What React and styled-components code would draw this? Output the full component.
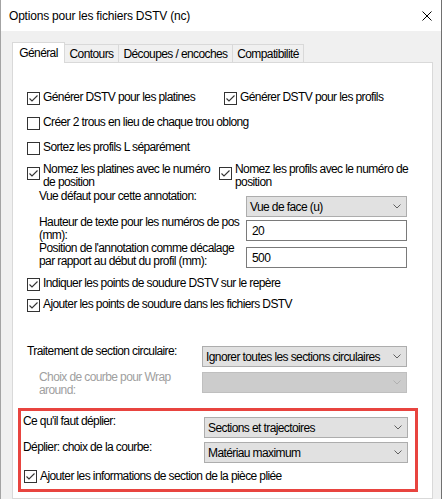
import React from "react";
import styled, { createGlobalStyle } from "styled-components";

const Global = createGlobalStyle`
  html, body { margin: 0; padding: 0; background: #f0f0f0; }
  body { font-family: "Liberation Sans", Arial, sans-serif; }
  *, *::before, *::after { box-sizing: border-box; }
`;

const Window = styled.div`
  width: 442px;
  height: 499px;
  display: flex;
  flex-direction: column;
  background: #f0f0f0;
  border-left: 1px solid #a3a3a3;
  border-right: 1px solid #707070;
  overflow: hidden;
  font-size: 12px;
  letter-spacing: -0.6px;
  color: #000;
`;

const TitleBar = styled.div`
  flex: none;
  height: 31px;
  background: #fff;
  display: flex;
  align-items: center;
  justify-content: space-between;
  padding: 0 9px 0 8px;
`;

const Title = styled.span`
  font-size: 12px;
  letter-spacing: -0.2px;
`;

const CloseIcon = styled.svg`
  display: block;
  width: 10px;
  height: 10px;
`;

const Body = styled.div`
  flex: 1;
  min-height: 0;
  display: flex;
  flex-direction: column;
  padding: 11px 8px 0 11px;
`;

const TabStrip = styled.div`
  flex: none;
  height: 20px;
  display: flex;
  align-items: flex-end;
`;

const Tab = styled.div`
  position: relative;
  z-index: ${(p) => (p.$active ? 1 : 0)};
  width: ${(p) => p.$w}px;
  height: ${(p) => (p.$active ? 21 : 18)}px;
  margin-left: ${(p) => (p.$first ? 0 : -1)}px;
  margin-bottom: ${(p) => (p.$active ? -1 : 0)}px;
  background: ${(p) => (p.$active ? "#fff" : "#f0f0f0")};
  border: 1px solid #d9d9d9;
  border-bottom: none;
  display: flex;
  align-items: center;
  justify-content: center;
  white-space: nowrap;
`;

const Panel = styled.div`
  flex: 1;
  background: #fff;
  border: 1px solid #d9d9d9;
  display: flex;
  flex-direction: column;
`;

const CheckRow = styled.div`
  display: flex;
  align-items: flex-start;
  margin-top: ${(p) => p.$mt}px;
  padding-left: ${(p) => p.$indent}px;
`;

const CheckItem = styled.div`
  flex: none;
  display: flex;
  align-items: flex-start;
  gap: 3px;
  width: ${(p) => (p.$w ? `${p.$w}px` : "auto")};
`;

const Box = styled.span`
  flex: none;
  width: 13px;
  height: 13px;
  margin-top: ${(p) => p.$dy}px;
  border: 1px solid #333;
  background: #fff;
  display: flex;
  align-items: center;
  justify-content: center;
`;

const Text = styled.span`
  line-height: 13px;
  white-space: nowrap;
  color: ${(p) => (p.$disabled ? "#a0a0a0" : "#000")};
`;

const FieldRow = styled.div`
  display: flex;
  align-items: flex-start;
  margin-top: ${(p) => p.$mt}px;
  padding-right: ${(p) => p.$pr}px;
`;

const FieldLabel = styled(Text)`
  flex: 1;
  padding-left: ${(p) => p.$indent}px;
`;

const Select = styled.div`
  flex: none;
  width: ${(p) => p.$w}px;
  height: 21px;
  margin-top: ${(p) => p.$dy}px;
  display: flex;
  align-items: center;
  justify-content: space-between;
  padding: 0 5px 0 3px;
  background: ${(p) => (p.$disabled ? "#cccccc" : "#e1e1e1")};
  border: 1px solid ${(p) => (p.$disabled ? "#bfbfbf" : "#adadad")};
  white-space: nowrap;
`;

const TextBox = styled.div`
  flex: none;
  width: ${(p) => p.$w}px;
  height: 21px;
  margin-top: ${(p) => p.$dy}px;
  display: flex;
  align-items: center;
  padding-left: 5px;
  background: #fff;
  border: 1px solid #7a7a7a;
`;

const Highlight = styled.div`
  margin: 11px 14px 0 5px;
  border: 3px solid #e8443f;
  padding: 4px 7px 6px 0;
  display: flex;
  flex-direction: column;
`;

const Check = ({ on, dy = 1 }) => (
  <Box $dy={dy}>
    {on && (
      <svg width="11" height="11" viewBox="0 0 11 11">
        <polyline
          points="1.5,5.5 4,8 9.5,2.5"
          fill="none"
          stroke="#333"
          strokeWidth="1.1"
        />
      </svg>
    )}
  </Box>
);

const Chevron = ({ color = "#606060" }) => (
  <svg width="8" height="5" viewBox="0 0 8 5">
    <polyline points="0.5,0.5 4,4 7.5,0.5" fill="none" stroke={color} strokeWidth="1" />
  </svg>
);

const Dropdown = ({ w, dy, value, disabled }) => (
  <Select $w={w} $dy={dy} $disabled={disabled}>
    <span>{value}</span>
    <Chevron color={disabled ? "#b0b0b0" : "#606060"} />
  </Select>
);

export default function App() {
  return (
    <>
      <Global />
      <Window>
        <TitleBar>
          <Title>Options pour les fichiers DSTV (nc)</Title>
          <CloseIcon viewBox="0 0 10 10">
            <path d="M0.5 0.5 L9.5 9.5 M9.5 0.5 L0.5 9.5" stroke="#000" strokeWidth="1" fill="none" />
          </CloseIcon>
        </TitleBar>
        <Body>
          <TabStrip>
            <Tab $first $active $w={53}>Général</Tab>
            <Tab $w={55}>Contours</Tab>
            <Tab $w={115}>Découpes / encoches</Tab>
            <Tab $w={72}>Compatibilité</Tab>
          </TabStrip>
          <Panel>
            <CheckRow $mt={28} $indent={14}>
              <CheckItem $w={197}>
                <Check on />
                <Text>Générer DSTV pour les platines</Text>
              </CheckItem>
              <CheckItem>
                <Check on />
                <Text>Générer DSTV pour les profils</Text>
              </CheckItem>
            </CheckRow>
            <CheckRow $mt={11} $indent={14}>
              <CheckItem>
                <Check />
                <Text>Créer 2 trous en lieu de chaque trou oblong</Text>
              </CheckItem>
            </CheckRow>
            <CheckRow $mt={11} $indent={14}>
              <CheckItem>
                <Check />
                <Text>Sortez les profils L séparément</Text>
              </CheckItem>
            </CheckRow>
            <CheckRow $mt={8} $indent={14}>
              <CheckItem $w={192}>
                <Check on dy={4} />
                <Text>
                  Nomez les platines avec le numéro
                  <br />
                  de position
                </Text>
              </CheckItem>
              <CheckItem>
                <Check on dy={4} />
                <Text>
                  Nomez les profils avec le numéro de
                  <br />
                  position
                </Text>
              </CheckItem>
            </CheckRow>

            <FieldRow $mt={1} $pr={25}>
              <FieldLabel $indent={26}>Vue défaut pour cette annotation:</FieldLabel>
              <Dropdown w={161} dy={6} value="Vue de face (u)" />
            </FieldRow>
            <FieldRow $mt={-1} $pr={25}>
              <FieldLabel $indent={26}>
                Hauteur de texte pour les numéros de pos
                <br />
                (mm):
              </FieldLabel>
              <TextBox $w={161} $dy={4}>20</TextBox>
            </FieldRow>
            <FieldRow $mt={0} $pr={25}>
              <FieldLabel $indent={26}>
                Position de l'annotation comme décalage
                <br />
                par rapport au début du profil (mm):
              </FieldLabel>
              <TextBox $w={161} $dy={5}>500</TextBox>
            </FieldRow>

            <CheckRow $mt={9} $indent={14}>
              <CheckItem>
                <Check on />
                <Text>Indiquer les points de soudure DSTV sur le repère</Text>
              </CheckItem>
            </CheckRow>
            <CheckRow $mt={7} $indent={14}>
              <CheckItem>
                <Check on />
                <Text>Ajouter les points de soudure dans les fichiers DSTV</Text>
              </CheckItem>
            </CheckRow>

            <FieldRow $mt={33} $pr={25}>
              <FieldLabel $indent={14}>Traitement de section circulaire:</FieldLabel>
              <Dropdown w={205} dy={1} value="Ignorer toutes les sections circulaires" />
            </FieldRow>
            <FieldRow $mt={4} $pr={25}>
              <FieldLabel $indent={26} $disabled>
                Choix de courbe pour Wrap
                <br />
                around:
              </FieldLabel>
              <Dropdown w={205} dy={1} value="" disabled />
            </FieldRow>

            <Highlight>
              <FieldRow $mt={0} $pr={0}>
                <FieldLabel $indent={2}>Ce qu'il faut déplier:</FieldLabel>
                <Dropdown w={204} dy={2} value="Sections et trajectoires" />
              </FieldRow>
              <FieldRow $mt={3} $pr={0}>
                <FieldLabel $indent={2}>Déplier: choix de la courbe:</FieldLabel>
                <Dropdown w={204} dy={1} value="Matériau maximum" />
              </FieldRow>
              <CheckRow $mt={7} $indent={3}>
                <CheckItem>
                  <Check on dy={0} />
                  <Text>Ajouter les informations de section de la pièce pliée</Text>
                </CheckItem>
              </CheckRow>
            </Highlight>
          </Panel>
        </Body>
      </Window>
    </>
  );
}
